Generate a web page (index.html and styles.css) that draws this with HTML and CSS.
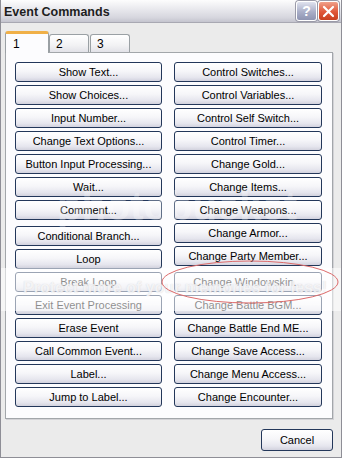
FILE: index.html
```html
<!DOCTYPE html>
<html lang="en">
<head>
    <meta charset="UTF-8">
    <title>Event Commands</title>
    <link rel="stylesheet" href="styles.css">
</head>
<body>

    <div class="window">
        <div class="titlebar">
            <span class="title">Event Commands</span>
            <div class="title-buttons">
                <span class="tb-btn tb-help">?</span>
                <span class="tb-btn tb-close">
                    <svg width="13" height="13" viewBox="0 0 13 13">
                        <path d="M2 2 L11 11 M11 2 L2 11" stroke="#fff" stroke-width="2.2" stroke-linecap="round"/>
                    </svg>
                </span>
            </div>
        </div>

        <div class="dialog-body">
            <div class="tabs">
                <div class="tab active">1</div>
                <div class="tab">2</div>
                <div class="tab">3</div>
            </div>

            <div class="panel">
                <div class="col">
                    <button class="cmd">Show Text...</button>
                    <button class="cmd">Show Choices...</button>
                    <button class="cmd">Input Number...</button>
                    <button class="cmd">Change Text Options...</button>
                    <button class="cmd">Button Input Processing...</button>
                    <button class="cmd">Wait...</button>
                    <button class="cmd">Comment...</button>
                    <button class="cmd sep">Conditional Branch...</button>
                    <button class="cmd">Loop</button>
                    <button class="cmd">Break Loop</button>
                    <button class="cmd">Exit Event Processing</button>
                    <button class="cmd">Erase Event</button>
                    <button class="cmd">Call Common Event...</button>
                    <button class="cmd">Label...</button>
                    <button class="cmd">Jump to Label...</button>
                </div>
                <div class="col">
                    <button class="cmd">Control Switches...</button>
                    <button class="cmd">Control Variables...</button>
                    <button class="cmd">Control Self Switch...</button>
                    <button class="cmd">Control Timer...</button>
                    <button class="cmd">Change Gold...</button>
                    <button class="cmd">Change Items...</button>
                    <button class="cmd">Change Weapons...</button>
                    <button class="cmd">Change Armor...</button>
                    <button class="cmd">Change Party Member...</button>
                    <button class="cmd sep">Change Windowskin...</button>
                    <button class="cmd">Change Battle BGM...</button>
                    <button class="cmd">Change Battle End ME...</button>
                    <button class="cmd">Change Save Access...</button>
                    <button class="cmd">Change Menu Access...</button>
                    <button class="cmd">Change Encounter...</button>
                </div>
            </div>

            <div class="footer">
                <button class="cmd cancel">Cancel</button>
            </div>
        </div>

        <!-- image host watermark + the red circle drawn over the screenshot -->
        <div class="wm-logo">photobucket</div>
        <div class="wm-band">
            <span class="wm-text">Protect more of your memories for less!</span>
        </div>
        <svg class="marker" width="342" height="458">
            <ellipse cx="250" cy="282" rx="88" ry="21" fill="none" stroke="#dc6a6a" stroke-width="1"/>
        </svg>
    </div>

</body>
</html>
```

FILE: styles.css
```css
body {
    margin: 0;
    font-family: 'Liberation Sans', Arial, sans-serif;
    background: #ebebeb;
}

.window {
    position: relative;
    width: 342px;
    height: 458px;
    box-sizing: border-box;
    border: 1px solid #8e8e96;
    border-top: none;
    background: #ebebeb;
    overflow: hidden;
}

.titlebar {
    height: 23px;
    display: flex;
    align-items: center;
    justify-content: space-between;
    padding: 0 2px 0 3px;
    background: linear-gradient(#fdfdfd, #ececf0 35%, #d6d6de 80%, #c4c4ce);
    border-bottom: 1px solid #a8a8b2;
    box-sizing: border-box;
}

.title {
    font-size: 12.5px;
    font-weight: bold;
    color: #1e1e1e;
    margin-top: 1px;
}

.title-buttons {
    display: flex;
    gap: 1px;
}

.tb-btn {
    width: 21px;
    height: 20px;
    box-sizing: border-box;
    border-radius: 3px;
    border: 1px solid #fff;
    display: flex;
    align-items: center;
    justify-content: center;
    box-shadow: 0 0 0 1px #9a9aa8;
}

.tb-help {
    background: linear-gradient(#dfe2ee, #a9aec8 55%, #8e94b2);
    color: #fff;
    font-weight: bold;
    font-size: 14px;
}

.tb-close {
    background: linear-gradient(#f0a08a, #e0583a 55%, #c8401f);
}

.dialog-body {
    padding: 8px 8px 0 4px;
}

.tabs {
    display: flex;
    align-items: flex-end;
    height: 21px;
}

.tab {
    position: relative;
    width: 40px;
    height: 18px;
    box-sizing: border-box;
    border: 1px solid #9aa0a4;
    border-bottom: none;
    border-radius: 3px 3px 0 0;
    background: linear-gradient(#ffffff, #f2f2f4 60%, #e2e2e8);
    font-size: 12px;
    padding: 2px 0 0 6px;
    color: #000;
}

.tab + .tab {
    margin-left: 1px;
}

.tab.active {
    width: 44px;
    height: 22px;
    margin-bottom: -1px;
    z-index: 1;
    background: #fcfcfe;
    border-top: 3px solid #f0b048;
    padding: 3px 0 0 7px;
}

.tab.active + .tab {
    margin-left: 0;
}

.panel {
    display: grid;
    grid-template-columns: 147px 148px;
    column-gap: 12px;
    width: 328px;
    box-sizing: border-box;
    padding: 9px 10px 11px 9px;
    border: 1px solid #a2a6aa;
    background: #fcfcfe;
    box-shadow: 1px 1px 0 #d2d2d6;
}

.col {
    display: flex;
    flex-direction: column;
    gap: 3px;
}

.cmd {
    height: 20px;
    padding: 0;
    border: 1px solid #23375a;
    border-radius: 3px;
    background: linear-gradient(#ffffff, #f6f6f9 45%, #e6e6ee 80%, #d2d2de);
    font-family: 'Liberation Sans', Arial, sans-serif;
    font-size: 11px;
    color: #000;
    white-space: nowrap;
}

.cmd.sep {
    margin-top: 3px;
}

.footer {
    display: flex;
    justify-content: flex-end;
    margin-top: 10px;
}

.cancel {
    width: 72px;
    height: 22px;
}

/* overlays */
.wm-logo {
    position: absolute;
    left: 56px;
    top: 184px;
    font-size: 40px;
    font-weight: bold;
    color: rgba(255, 255, 255, 0.3);
    pointer-events: none;
}

.wm-band {
    position: absolute;
    left: 0;
    right: 0;
    top: 268px;
    height: 43px;
    background: rgba(255, 255, 255, 0.55);
    pointer-events: none;
}

.wm-text {
    position: absolute;
    left: 22px;
    top: 11px;
    font-size: 16px;
    font-weight: bold;
    color: rgba(255, 255, 255, 0.75);
    text-shadow: 0 0 1px rgba(160, 160, 170, 0.45);
    white-space: nowrap;
}

.marker {
    position: absolute;
    left: -1px;
    top: 0;
    pointer-events: none;
}
```
